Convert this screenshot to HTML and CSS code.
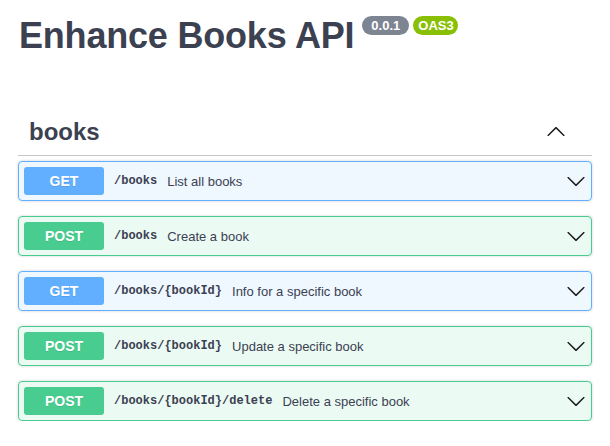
FILE: index.html
```html
<!DOCTYPE html>
<html>
<head>
<meta charset="utf-8">
<link rel="stylesheet" href="styles.css">
</head>
<body>
<div class="page">
  <div class="info">
    <h2 class="title">Enhance Books API</h2>
    <span class="badge version">0.0.1</span>
    <span class="badge oas">OAS3</span>
  </div>
  <section class="tag-section">
    <h3 class="tag-header">
      <span class="tag-name">books</span>
      <svg class="arrow" width="20" height="20" viewBox="0 0 20 20"><path d="M17.418 13.891c.272.268.709.268.979 0s.271-.701 0-.969l-7.908-7.83c-.27-.268-.707-.268-.979 0l-7.908 7.83c-.27.268-.27.701 0 .969.271.268.709.268.979 0L10 6.75l7.418 7.141z"/></svg>
    </h3>
    <div class="ops">
      <div class="op get">
        <span class="method">GET</span>
        <span class="path">/books</span>
        <span class="desc">List all books</span>
        <svg class="arrow" width="20" height="20" viewBox="0 0 20 20"><path d="M17.418 6.109c.272-.268.709-.268.979 0s.271.701 0 .969l-7.908 7.83c-.27.268-.707.268-.979 0l-7.908-7.83c-.27-.268-.27-.701 0-.969.271-.268.709-.268.979 0L10 13.25l7.418-7.141z"/></svg>
      </div>
      <div class="op post">
        <span class="method">POST</span>
        <span class="path">/books</span>
        <span class="desc">Create a book</span>
        <svg class="arrow" width="20" height="20" viewBox="0 0 20 20"><path d="M17.418 6.109c.272-.268.709-.268.979 0s.271.701 0 .969l-7.908 7.83c-.27.268-.707.268-.979 0l-7.908-7.83c-.27-.268-.27-.701 0-.969.271-.268.709-.268.979 0L10 13.25l7.418-7.141z"/></svg>
      </div>
      <div class="op get">
        <span class="method">GET</span>
        <span class="path">/books/{bookId}</span>
        <span class="desc">Info for a specific book</span>
        <svg class="arrow" width="20" height="20" viewBox="0 0 20 20"><path d="M17.418 6.109c.272-.268.709-.268.979 0s.271.701 0 .969l-7.908 7.83c-.27.268-.707.268-.979 0l-7.908-7.83c-.27-.268-.27-.701 0-.969.271-.268.709-.268.979 0L10 13.25l7.418-7.141z"/></svg>
      </div>
      <div class="op post">
        <span class="method">POST</span>
        <span class="path">/books/{bookId}</span>
        <span class="desc">Update a specific book</span>
        <svg class="arrow" width="20" height="20" viewBox="0 0 20 20"><path d="M17.418 6.109c.272-.268.709-.268.979 0s.271.701 0 .969l-7.908 7.83c-.27.268-.707.268-.979 0l-7.908-7.83c-.27-.268-.27-.701 0-.969.271-.268.709-.268.979 0L10 13.25l7.418-7.141z"/></svg>
      </div>
      <div class="op post">
        <span class="method">POST</span>
        <span class="path">/books/{bookId}/delete</span>
        <span class="desc">Delete a specific book</span>
        <svg class="arrow" width="20" height="20" viewBox="0 0 20 20"><path d="M17.418 6.109c.272-.268.709-.268.979 0s.271.701 0 .969l-7.908 7.83c-.27.268-.707.268-.979 0l-7.908-7.83c-.27-.268-.27-.701 0-.969.271-.268.709-.268.979 0L10 13.25l7.418-7.141z"/></svg>
      </div>
    </div>
  </section>
</div>
</body>
</html>
```

FILE: styles.css
```css
html, body {
  margin: 0;
  padding: 0;
  background: #fff;
}
body {
  font-family: "Liberation Sans", Arial, sans-serif;
  color: #3b4151;
}
.page {
  padding: 15px 18px 0 18px;
}
.info {
  display: flex;
  align-items: flex-start;
}
.title {
  margin: 0 0 0 1px;
  font-size: 36px;
  line-height: 41px;
  font-weight: 700;
  color: #3b4151;
  letter-spacing: -0.2px;
}
.badge {
  margin-top: 1px;
  font-size: 13px;
  line-height: 15px;
  font-weight: 700;
  color: #fff;
  border-radius: 57px;
  padding: 2px 9px;
}
.version {
  background: #7d8492;
  margin-left: 8px;
}
.oas {
  background: #89bf04;
  margin-left: 4px;
  padding: 2px 4px 2px 5px;
}
.tag-section {
  margin-top: 52px;
}
.tag-header {
  display: flex;
  align-items: center;
  justify-content: space-between;
  margin: 0 0 5px 0;
  padding: 10px 26px 10px 10px;
  border-bottom: 1px solid rgba(59, 65, 81, 0.3);
  font-size: 24px;
  line-height: 27px;
  font-weight: 700;
  color: #3b4151;
}
.tag-name {
  padding-left: 1px;
}
.arrow {
  display: block;
  flex: none;
  fill: #1b1b1b;
}
.ops {
  display: flex;
  flex-direction: column;
  gap: 15px;
}
.op {
  display: flex;
  align-items: center;
  padding: 5px;
  border: 1px solid;
  border-radius: 4px;
  box-shadow: 0 0 3px rgba(0, 0, 0, 0.19);
}
.op.get {
  background: rgba(97, 175, 254, 0.1);
  border-color: #61affe;
}
.op.post {
  background: rgba(73, 204, 144, 0.1);
  border-color: #49cc90;
}
.method {
  flex: none;
  width: 80px;
  padding: 6px 0;
  text-align: center;
  font-size: 14px;
  line-height: 16px;
  font-weight: 700;
  color: #fff;
  border-radius: 3px;
  text-shadow: 0 1px 0 rgba(0, 0, 0, 0.1);
}
.get .method {
  background: #61affe;
}
.post .method {
  background: #49cc90;
}
.path {
  padding: 0 10px;
  font-family: "Liberation Mono", "Courier New", monospace;
  font-size: 12px;
  font-weight: 700;
  color: #3b4151;
}
.desc {
  flex: 1;
  font-size: 13px;
  color: #3b4151;
}
```
